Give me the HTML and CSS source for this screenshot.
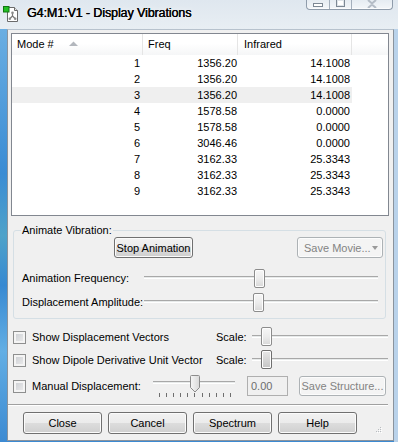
FILE: index.html
```html
<!DOCTYPE html>
<html lang="en">
<head>
    <meta charset="UTF-8">
    <title>G4:M1:V1 - Display Vibrations</title>
    <link rel="stylesheet" href="styles.css">
</head>
<body>
    <div class="window">
        <div class="titlebar">
            <svg class="app-icon" width="16" height="16" viewBox="0 0 16 16">
                <path d="M4.5 1.5h7l3 3v11h-10z" fill="#fff" stroke="#6b6b6b"/>
                <path d="M11.5 1.5v3h3" fill="#e6e6e6" stroke="#6b6b6b"/>
                <path d="M9.5 7v3M9.5 10l-2.5 2.5M9.5 10l2.5 2.5" stroke="#7a7a7a" stroke-width="1.2" fill="none"/>
                <circle cx="9.5" cy="6.8" r="1.3" fill="#8a8a8a"/>
                <circle cx="6.8" cy="12.8" r="1.3" fill="#8a8a8a"/>
                <circle cx="12.2" cy="12.8" r="1.3" fill="#8a8a8a"/>
                <rect x="0.5" y="0.5" width="5.5" height="5.5" fill="#22c022" stroke="#127512"/>
            </svg>
            <span class="title">G4:M1:V1 - Display Vibrations</span>
            <div class="caption-buttons">
                <span class="cap cap-min"><i></i></span>
                <span class="cap cap-max"><i></i></span>
                <span class="cap cap-close">
                    <svg width="14" height="8" viewBox="0 0 14 8"><path d="M3 0l4 3.5 4-3.5M3 8l4-3.5 4 3.5" stroke="#b4bcc6" stroke-width="2" fill="none"/></svg>
                </span>
            </div>
        </div>
        <div class="frame">
            <div class="client">
                <div class="listview">
                    <div class="lv-header">
                        <div class="lv-col">Mode #
                            <svg class="sort-arrow" width="9" height="5" viewBox="0 0 9 5"><path d="M0 5L4.5 0.5 9 5z" fill="#b3b7bd"/></svg>
                        </div>
                        <div class="lv-col">Freq</div>
                        <div class="lv-col lv-col-ir">Infrared</div>
                        <div class="lv-col lv-col-rest"></div>
                    </div>
                    <div class="lv-body">
                        <div class="lv-row"><span class="c-mode">1</span><span class="c-freq">1356.20</span><span class="c-ir">14.1008</span></div>
                        <div class="lv-row"><span class="c-mode">2</span><span class="c-freq">1356.20</span><span class="c-ir">14.1008</span></div>
                        <div class="lv-row selected"><span class="c-mode">3</span><span class="c-freq">1356.20</span><span class="c-ir">14.1008</span></div>
                        <div class="lv-row"><span class="c-mode">4</span><span class="c-freq">1578.58</span><span class="c-ir">0.0000</span></div>
                        <div class="lv-row"><span class="c-mode">5</span><span class="c-freq">1578.58</span><span class="c-ir">0.0000</span></div>
                        <div class="lv-row"><span class="c-mode">6</span><span class="c-freq">3046.46</span><span class="c-ir">0.0000</span></div>
                        <div class="lv-row"><span class="c-mode">7</span><span class="c-freq">3162.33</span><span class="c-ir">25.3343</span></div>
                        <div class="lv-row"><span class="c-mode">8</span><span class="c-freq">3162.33</span><span class="c-ir">25.3343</span></div>
                        <div class="lv-row"><span class="c-mode">9</span><span class="c-freq">3162.33</span><span class="c-ir">25.3343</span></div>
                    </div>
                </div>

                <fieldset class="group">
                    <legend>Animate Vibration:</legend>
                    <div class="anim-row">
                        <button class="btn btn-stop">Stop Animation</button>
                        <button class="btn btn-movie" disabled>Save Movie...<span class="drop-arrow"></span></button>
                    </div>
                    <div class="slider-row">
                        <span class="slider-label">Animation Frequency:</span>
                        <div class="slider">
                            <div class="track"></div>
                            <span class="thumb" style="left: 110px"></span>
                        </div>
                    </div>
                    <div class="slider-row">
                        <span class="slider-label">Displacement Amplitude:</span>
                        <div class="slider">
                            <div class="track"></div>
                            <span class="thumb" style="left: 109px"></span>
                        </div>
                    </div>
                </fieldset>

                <div class="check-row row-a">
                    <span class="checkbox"></span>
                    <span class="check-label">Show Displacement Vectors</span>
                    <span class="scale-label">Scale:</span>
                    <div class="slider scale-slider">
                        <div class="track"></div>
                        <span class="thumb" style="left: 9px"></span>
                    </div>
                </div>
                <div class="check-row row-b">
                    <span class="checkbox"></span>
                    <span class="check-label">Show Dipole Derivative Unit Vector</span>
                    <span class="scale-label">Scale:</span>
                    <div class="slider scale-slider">
                        <div class="track"></div>
                        <span class="thumb thumb-hot" style="left: 9px"></span>
                    </div>
                </div>
                <div class="check-row row-c">
                    <span class="checkbox"></span>
                    <span class="check-label manual-label">Manual Displacement:</span>
                    <div class="slider manual-slider">
                        <div class="track"></div>
                        <svg class="thumb-down" style="left: 37px" width="10" height="18" viewBox="0 0 10 18">
                            <defs>
                                <linearGradient id="tg" x1="0" x2="1">
                                    <stop offset="0" stop-color="#f6f6f6"/>
                                    <stop offset="1" stop-color="#d9d9d9"/>
                                </linearGradient>
                            </defs>
                            <path d="M1.5 0.5h7a1 1 0 0 1 1 1v11l-4.5 4.5-4.5-4.5v-11a1 1 0 0 1 1-1z" fill="url(#tg)" stroke="#8c8c8c"/>
                        </svg>
                        <div class="ticks">
                            <i></i><i></i><i></i><i></i><i></i><i></i><i></i><i></i><i></i><i></i><i></i>
                        </div>
                    </div>
                    <span class="textbox">0.00</span>
                    <button class="btn btn-structure" disabled>Save Structure...</button>
                </div>

                <div class="separator"></div>

                <div class="button-row">
                    <button class="btn">Close</button>
                    <button class="btn">Cancel</button>
                    <button class="btn">Spectrum</button>
                    <button class="btn">Help</button>
                </div>

                <svg class="grip" width="7" height="7" viewBox="0 0 7 7">
                    <g fill="#fff">
                        <rect x="5" y="1" width="1" height="1"/>
                        <rect x="3" y="3" width="1" height="1"/><rect x="5" y="3" width="1" height="1"/>
                        <rect x="1" y="5" width="1" height="1"/><rect x="3" y="5" width="1" height="1"/><rect x="5" y="5" width="1" height="1"/>
                    </g>
                    <g fill="#b8bcc0">
                        <rect x="4" y="0" width="1" height="1"/>
                        <rect x="2" y="2" width="1" height="1"/><rect x="4" y="2" width="1" height="1"/>
                        <rect x="0" y="4" width="1" height="1"/><rect x="2" y="4" width="1" height="1"/><rect x="4" y="4" width="1" height="1"/>
                    </g>
                </svg>
            </div>
        </div>
    </div>
</body>
</html>
```

FILE: styles.css
```css
* {
    box-sizing: border-box;
}
body {
    margin: 0;
    font-family: 'Liberation Sans', Arial, sans-serif;
    font-size: 11px;
    color: #000;
    background: #3f8fd6;
}
.window {
    width: 398px;
    height: 442px;
    display: flex;
    flex-direction: column;
}

/* title bar */
.titlebar {
    height: 29px;
    display: flex;
    align-items: center;
    padding: 0 5px 0 3px;
    background: linear-gradient(to bottom, #dfe7ef, #e8eef3);
}
.app-icon {
    margin-top: -2px;
    flex-shrink: 0;
}
.title {
    margin-left: 8px;
    font-family: 'Liberation Sans', Arial, sans-serif;
    font-size: 12.5px;
    letter-spacing: -0.1px;
    color: #000;
    text-shadow: 0 0 6px #fff, 0.3px 0 0 #000, 0 0 0.5px #000;
    margin-top: -4px;
}
.caption-buttons {
    margin-left: auto;
    align-self: flex-start;
    display: flex;
    height: 10px;
    border: 1px solid #8f9cab;
    border-top: none;
    border-radius: 0 0 4px 4px;
    background: linear-gradient(to bottom, #e6ecf2, #f3f6f9);
    box-shadow: inset 0 -1px 0 #fbfcfd;
}
.cap {
    display: flex;
    justify-content: center;
    height: 100%;
}
.cap-min {
    width: 23px;
    border-right: 1px solid #a4afbc;
}
.cap-min i {
    width: 10px;
    height: 4px;
    margin-top: 3px;
    border: 1px solid #7d8894;
    background: #fff;
}
.cap-max {
    width: 22px;
    border-right: 1px solid #a4afbc;
}
.cap-max i {
    width: 9px;
    height: 7px;
    border: 1px solid #7d8894;
    border-top: none;
    background: #fff;
    box-shadow: inset 0 0 0 1px #dfe4e9;
}
.cap-close {
    width: 40px;
    align-items: flex-start;
}

/* frame around the client area */
.frame {
    flex: 1;
    display: flex;
    padding: 0 4px 1px 7px;
    background:
        linear-gradient(to right, transparent 394px, #b9d2ea 394px),
        linear-gradient(to bottom, #6aaee2 0, #3a8cd4 35%, #4ea2c9 50%, #3789d2 62%, #62aee4 78%, #3c8ad2 100%);
}
.client {
    flex: 1;
    position: relative;
    display: flex;
    flex-direction: column;
    background: #f0f0f0;
    border: 1px solid #8a939d;
    border-top-color: #b7c2cd;
}

/* list view */
.listview {
    margin: 3px 4px 0 3px;
    height: 183px;
    border: 1px solid #828790;
    background: #fff;
}
.lv-header {
    display: grid;
    grid-template-columns: 131px 95px 114px 1fr;
    height: 21px;
    background: linear-gradient(to bottom, #fff 0, #fff 45%, #f5f6f7 100%);
}
.lv-col {
    line-height: 21px;
    padding-left: 5px;
    border-right: 1px solid #e5e5e5;
    white-space: nowrap;
}
.lv-col-ir {
    padding-left: 6px;
}
.lv-col-rest {
    border-right: none;
}
.sort-arrow {
    margin-left: 12px;
    vertical-align: 2px;
}
.lv-row {
    display: grid;
    grid-template-columns: 131px 95px 114px;
    width: 340px;
    height: 16px;
    line-height: 16px;
    text-align: right;
}
.lv-row.selected {
    background: #efefef;
}
.c-mode {
    padding-right: 3px;
}
.c-freq {
    padding-right: 1px;
}
.c-ir {
    padding-right: 2px;
}

/* buttons */
.btn {
    font-family: 'Liberation Sans', Arial, sans-serif;
    font-size: 11px;
    color: #000;
    width: 79px;
    height: 22px;
    padding: 0;
    border: 1px solid #707070;
    border-radius: 3px;
    background: linear-gradient(to bottom, #f2f2f2 0, #ebebeb 50%, #dddddd 50%, #cfcfcf 100%);
    box-shadow: inset 0 0 0 1px #fbfbfb;
}
.btn:disabled {
    color: #838383;
    border-color: #adb2b5;
    background: #f4f4f4;
    box-shadow: inset 0 0 0 1px #fcfcfc;
}

/* group box */
.group {
    margin: 8px 7px 0 5px;
    padding: 0 2px 4px 8px;
    border: 1px solid #d5dfe5;
    border-radius: 3px;
    min-width: 0;
}
.group legend {
    padding: 0 1px;
    margin-left: -1px;
    line-height: 13px;
}
.anim-row {
    display: flex;
    justify-content: space-between;
    height: 21px;
}
.btn-stop {
    height: 21px;
    margin-left: 92px;
}
.btn-movie {
    position: relative;
    width: 86px;
    height: 21px;
    text-align: left;
    padding-left: 6px;
}
.drop-arrow {
    position: absolute;
    right: 4px;
    top: 8px;
    border-left: 3px solid transparent;
    border-right: 3px solid transparent;
    border-top: 4px solid #9a9a9a;
}
.slider-row {
    display: flex;
    align-items: center;
    height: 24px;
}
.slider-row:nth-child(3) {
    margin-top: 8px;
}
.slider-label {
    width: 122px;
    flex-shrink: 0;
}

/* trackbars */
.slider {
    position: relative;
    flex: 1;
    height: 100%;
    display: flex;
    align-items: center;
    margin-right: 5px;
}
.track {
    width: 100%;
    height: 3px;
    margin-top: -1px;
    background: #e7eaea;
    border-top: 1px solid #a8a8a8;
    border-bottom: 1px solid #fff;
}
.thumb {
    position: absolute;
    top: 3px;
    width: 11px;
    height: 19px;
    border: 1px solid #8c8c8c;
    border-radius: 2px;
    background: linear-gradient(to bottom, #f7f7f7 0, #ececec 50%, #d8d8d8 100%);
    box-shadow: inset 0 0 0 1px #fdfdfd;
}
.thumb-hot {
    border-color: #6f6f6f;
    background: linear-gradient(to bottom, #e8e8e8 0, #d6d6d6 50%, #c4c4c4 100%);
}

/* check rows */
.check-row {
    display: flex;
    align-items: center;
    height: 20px;
    margin-left: 5px;
}
.row-a {
    margin-top: 8px;
}
.row-b {
    margin-top: 3px;
}
.row-c {
    margin-top: 6px;
}
.checkbox {
    width: 13px;
    height: 13px;
    flex-shrink: 0;
    border: 1px solid #8e8f8f;
    background: linear-gradient(135deg, #c9ccd1 0, #eeeeee 100%);
    box-shadow: inset 0 0 0 2px #f4f4f4;
}
.check-label {
    margin-left: 6px;
    width: 184px;
    flex-shrink: 0;
    white-space: nowrap;
}
.scale-label {
    width: 36px;
    flex-shrink: 0;
}
.scale-slider .thumb {
    top: 0;
    height: 19px;
}
.scale-slider .track {
    margin-top: -2px;
}
.manual-label {
    width: 121px;
}
.manual-slider {
    flex: 0 0 82px;
    margin-right: 0;
    align-items: flex-start;
}
.manual-slider .track {
    margin-top: 5px;
}
.thumb-down {
    position: absolute;
    top: -1px;
}
.ticks {
    position: absolute;
    left: 6px;
    right: 4px;
    top: 17px;
    display: flex;
    justify-content: space-between;
}
.ticks i {
    width: 1px;
    height: 4px;
    background: #6e6e6e;
}
.textbox {
    margin-left: 12px;
    width: 41px;
    height: 20px;
    line-height: 18px;
    padding-left: 3px;
    border: 1px solid #afafaf;
    color: #6d6d6d;
}
.btn-structure {
    margin-left: 11px;
    width: 87px;
    height: 20px;
}

/* bottom */
.separator {
    margin: 8px 5px 0 0;
    border-top: 1px solid #a0a0a0;
    border-bottom: 1px solid #fff;
}
.button-row {
    display: flex;
    gap: 6px;
    margin: 6px 0 0 15px;
}
.grip {
    position: absolute;
    right: 10px;
    bottom: 6px;
}
```
